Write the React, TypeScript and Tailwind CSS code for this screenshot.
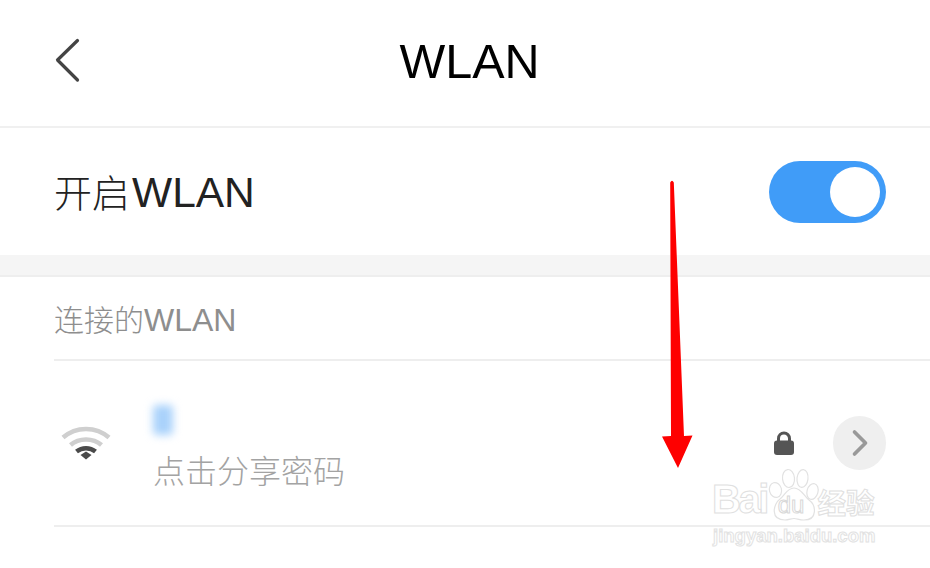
import { ChevronRight } from 'lucide-react';

const cjk = "font-['Liberation_Sans','Noto_Sans_CJK_SC',sans-serif]";

const BackIcon = () => (
    <svg className="absolute left-[50px] top-[34px]" width="36" height="52" viewBox="0 0 36 52" fill="none">
        <path d="M27.5 6.5L7.5 26L27.5 46" stroke="#444444" strokeWidth="3.2" strokeLinecap="round" strokeLinejoin="round" />
    </svg>
);

const WifiIcon = () => (
    <svg width="50" height="36" viewBox="0 0 50 36" fill="none">
        <path d="M2 13.5C15 2 35 2 48 13.5" stroke="#cfcfcf" strokeWidth="4.5" />
        <path d="M9.5 21C18 13.5 32 13.5 40.5 21" stroke="#cfcfcf" strokeWidth="4.5" />
        <path d="M15.5 27.5C21 23 29 23 34.5 27.5" stroke="#4a4a4a" strokeWidth="4.5" />
        <path d="M19.5 31L25 27.5L30.5 31L25 35.5Z" fill="#4a4a4a" />
    </svg>
);

const LockIcon = () => (
    <svg width="20" height="24" viewBox="0 0 20 24" fill="none">
        <path d="M4.5 11V7.5a5.5 5.5 0 0 1 11 0V11" stroke="#555555" strokeWidth="3" />
        <rect x="0" y="9.5" width="20" height="14.5" rx="3" fill="#555555" />
    </svg>
);

const Arrow = () => (
    <svg className="absolute left-0 top-0 pointer-events-none" width="930" height="568" viewBox="0 0 930 568">
        <path d="M670.2 182.5Q672 179 673.8 182.5L684 436L692.5 435.5L678 468L662 436.5L671 436Z" fill="#fe0000" />
    </svg>
);

const Watermark = () => (
    <div className="absolute left-[712px] top-[468px] w-[170px] text-white pointer-events-none">
        <svg className="absolute left-[56px] top-0" width="54" height="54" viewBox="0 0 54 54" fill="none" stroke="#e2e2e2" strokeWidth="1.2">
            <ellipse cx="7.5" cy="22" rx="6" ry="7.5" transform="rotate(-15 7.5 22)" fill="white" />
            <ellipse cx="20.5" cy="10.5" rx="6" ry="9" transform="rotate(-6 20.5 10.5)" fill="white" />
            <ellipse cx="34.5" cy="10.5" rx="5.5" ry="9" transform="rotate(6 34.5 10.5)" fill="white" />
            <ellipse cx="44.5" cy="23.5" rx="5.5" ry="8" transform="rotate(15 44.5 23.5)" fill="white" />
            <path d="M26 20C19 20 17 27 12 31C5 36 2 52 17 52C21 52 23 50.5 26 50.5C29 50.5 31 52 36 52C50 52 48 37 41 32C36 28 33 20 26 20Z" fill="white" />
        </svg>
        <div className="relative flex h-[54px] items-end">
            <span className="font-['Liberation_Sans',sans-serif] text-[40px] leading-[46px] font-bold tracking-[-2.5px] text-white [-webkit-text-stroke:1px_#e0e0e0]">Bai</span>
            <span className="ml-[11px] mb-[5px] font-['Liberation_Sans',sans-serif] text-[24px] leading-[24px] text-white [-webkit-text-stroke:1px_#d8d8d8]">du</span>
            <span className="ml-[13px] mb-[2px] font-['Noto_Sans_CJK_SC',sans-serif] text-[28.5px] leading-[36px] font-bold whitespace-nowrap text-white [-webkit-text-stroke:1px_#e0e0e0]">经验</span>
        </div>
        <div className="relative mt-[2px] ml-[1px] font-['Liberation_Sans',sans-serif] text-[18.5px] leading-[24px] font-bold whitespace-nowrap text-white [-webkit-text-stroke:1px_#e2e2e2]">jingyan.baidu.com</div>
    </div>
);

export default function App() {
    return (
        <div className={`relative h-[568px] w-[930px] overflow-hidden bg-white ${cjk}`}>
            <header className="relative flex h-[128px] items-center justify-center border-b-2 border-[#f0f0f0] pl-[9px]">
                <BackIcon />
                <h1 className="-mt-[3px] text-[48.5px] leading-none text-black">WLAN</h1>
            </header>

            <div className="flex h-[127px] items-center justify-between pl-[54px] pr-[44px]">
                <span className="mt-[3px] flex items-baseline leading-none text-[#222222]">
                    <span className="text-[38px] font-light">开启</span>
                    <span className="ml-[2px] text-[42.5px]">WLAN</span>
                </span>
                <div className="flex h-[62px] w-[117px] items-center justify-end rounded-full bg-[#409cf8] pr-[6px]">
                    <div className="h-[50px] w-[50px] rounded-full bg-white" />
                </div>
            </div>

            <div className="h-[22px] border-b-2 border-[#eeeeee] bg-[#f5f5f5]" />

            <div className="ml-[54px] flex h-[84px] items-center border-b-2 border-[#eeeeee]">
                <span className="mt-[3px] flex items-baseline leading-none text-[#8e8e8e]">
                    <span className="text-[30px] font-light">连接的</span>
                    <span className="text-[32px]">WLAN</span>
                </span>
            </div>

            <div className="ml-[54px] flex h-[166px] items-center border-b-2 border-[#eeeeee] pr-[44px]">
                <div className="ml-[7px] -mt-[3px] w-[50px]">
                    <WifiIcon />
                </div>
                <div className="ml-[39px] mt-[12px] flex-1">
                    <div className="h-[30px] w-[20px] translate-x-[3px] -translate-y-[1px] rounded-[4px] bg-[#a9d2fb] blur-[4px]" />
                    <p className="mt-[16px] ml-[3px] text-[32px] leading-[40px] font-light text-[#a3a3a3]">点击分享密码</p>
                </div>
                <LockIcon />
                <div className="ml-[39px] grid h-[54px] w-[53px] place-items-center rounded-full bg-[#efefef]">
                    <ChevronRight className="text-[#999999]" size={44} strokeWidth={2} />
                </div>
            </div>

            <Watermark />
            <Arrow />
        </div>
    );
}
